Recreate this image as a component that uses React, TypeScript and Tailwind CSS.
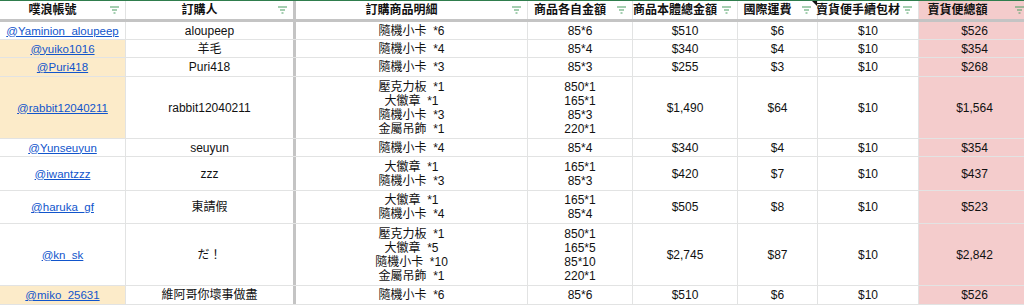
import React from "react";

type Row = {
  h: number;
  user: string;
  hl?: boolean;
  buyer: string;
  items: string[];
  prices: string[];
  sub: string;
  ship: string;
  fee: string;
  total: string;
};

const rows: Row[] = [
  { h: 18, user: "@Yaminion_aloupeep", buyer: "aloupeep", items: ["隨機小卡  *6"], prices: ["85*6"], sub: "$510", ship: "$6", fee: "$10", total: "$526" },
  { h: 18, user: "@yuiko1016", hl: true, buyer: "羊毛", items: ["隨機小卡  *4"], prices: ["85*4"], sub: "$340", ship: "$4", fee: "$10", total: "$354" },
  { h: 19, user: "@Puri418", hl: true, buyer: "Puri418", items: ["隨機小卡  *3"], prices: ["85*3"], sub: "$255", ship: "$3", fee: "$10", total: "$268" },
  {
    h: 62,
    user: "@rabbit12040211",
    hl: true,
    buyer: "rabbit12040211",
    items: ["壓克力板  *1", "大徽章  *1", "隨機小卡  *3", "金屬吊飾  *1"],
    prices: ["850*1", "165*1", "85*3", "220*1"],
    sub: "$1,490",
    ship: "$64",
    fee: "$10",
    total: "$1,564",
  },
  { h: 18, user: "@Yunseuyun", buyer: "seuyun", items: ["隨機小卡  *4"], prices: ["85*4"], sub: "$340", ship: "$4", fee: "$10", total: "$354" },
  { h: 34, user: "@iwantzzz", buyer: "zzz", items: ["大徽章  *1", "隨機小卡  *3"], prices: ["165*1", "85*3"], sub: "$420", ship: "$7", fee: "$10", total: "$437" },
  { h: 33, user: "@haruka_gf", buyer: "東請假", items: ["大徽章  *1", "隨機小卡  *4"], prices: ["165*1", "85*4"], sub: "$505", ship: "$8", fee: "$10", total: "$523" },
  {
    h: 62,
    user: "@kn_sk",
    buyer: "だ！",
    items: ["壓克力板  *1", "大徽章  *5", "隨機小卡  *10", "金屬吊飾  *1"],
    prices: ["850*1", "165*5", "85*10", "220*1"],
    sub: "$2,745",
    ship: "$87",
    fee: "$10",
    total: "$2,842",
  },
  { h: 19, user: "@miko_25631", hl: true, buyer: "維阿哥你壞事做盡", items: ["隨機小卡  *6"], prices: ["85*6"], sub: "$510", ship: "$6", fee: "$10", total: "$526" },
];

const FilterIcon = () => (
  <svg width="9" height="8" viewBox="0 0 9 8" className="shrink-0">
    <path d="M0 1h9M2 4h5M3.5 7h2" stroke="#4a9e63" strokeWidth="1.2" fill="none" />
  </svg>
);

const HeadCell = ({
  w,
  label,
  pink,
  note,
  extra,
}: {
  w: string;
  label: string;
  pink?: boolean;
  note?: boolean;
  extra?: string;
}) => (
  <div className={`${w} relative flex h-full shrink-0 items-center border-r border-[#e2e3e3] ${pink ? "bg-[#f4cccc]" : "bg-white"}`}>
    <div className={`flex min-w-0 flex-1 justify-center ${extra ?? ""}`}>
      <span className="whitespace-nowrap font-bold">{label}</span>
    </div>
    <div className="flex w-[20px] shrink-0 justify-end pr-[6px]">
      <FilterIcon />
    </div>
    {note && (
      <svg width="5" height="5" viewBox="0 0 5 5" className="absolute right-0 top-0">
        <path d="M0 0h5v5z" fill="#111" />
      </svg>
    )}
  </div>
);

const Cell = ({ w, children, bg }: { w: string; children: React.ReactNode; bg?: string }) => (
  <div className={`${w} flex h-full shrink-0 flex-col items-center justify-center border-r border-[#e2e3e3] ${bg ?? "bg-white"}`}>
    {children}
  </div>
);

const Divider = () => <div className="h-full w-[3px] shrink-0 bg-[#c4c4c4]" />;

export default function App() {
  return (
    <div className="h-[305px] w-[1024px] overflow-hidden bg-white text-[12px] leading-[14px] text-[#111] font-['Liberation_Sans','Noto_Sans_CJK_TC',sans-serif]">
      <div className="flex h-[19px] border-t border-[#2f7d4d]">
        <HeadCell w="w-[126px]" label="噗浪帳號" />
        <div className="flex h-full w-[167px] shrink-0 items-center bg-white">
          <div className="flex flex-1 justify-center">
            <span className="font-bold">訂購人</span>
          </div>
          <div className="flex w-[20px] justify-end pr-[6px]">
            <FilterIcon />
          </div>
        </div>
        <Divider />
        <HeadCell w="w-[232px]" label="訂購商品明細" />
        <HeadCell w="w-[105px]" label="商品各自金額" />
        <HeadCell w="w-[105px]" label="商品本體總金額" />
        <HeadCell w="w-[80px]" label="國際運費" note />
        <HeadCell w="w-[101px]" label="賣貨便手續包材" />
        <HeadCell w="w-[112px]" label="賣貨便總額" pink extra="pr-[14px]" />
      </div>
      <div className="h-[3px] w-full bg-[#c4c4c4]" />
      {rows.map((r) => (
        <div key={r.user} className="flex border-b border-[#e2e3e3]" style={{ height: r.h }}>
          <Cell w="w-[126px]" bg={r.hl ? "bg-[#fcebc9]" : "bg-white"}>
            <span className="text-[11.5px] text-[#1155cc] underline">{r.user}</span>
          </Cell>
          <div className="flex h-full w-[167px] shrink-0 items-center justify-center bg-white">
            <span>{r.buyer}</span>
          </div>
          <Divider />
          <Cell w="w-[232px]">
            {r.items.map((t) => (
              <span key={t} className="whitespace-pre">
                {t}
              </span>
            ))}
          </Cell>
          <Cell w="w-[105px]">
            {r.prices.map((t) => (
              <span key={t}>{t}</span>
            ))}
          </Cell>
          <Cell w="w-[105px]">{r.sub}</Cell>
          <Cell w="w-[80px]">{r.ship}</Cell>
          <Cell w="w-[101px]">{r.fee}</Cell>
          <Cell w="w-[112px]" bg="bg-[#f4cccc]">
            {r.total}
          </Cell>
        </div>
      ))}
    </div>
  );
}
